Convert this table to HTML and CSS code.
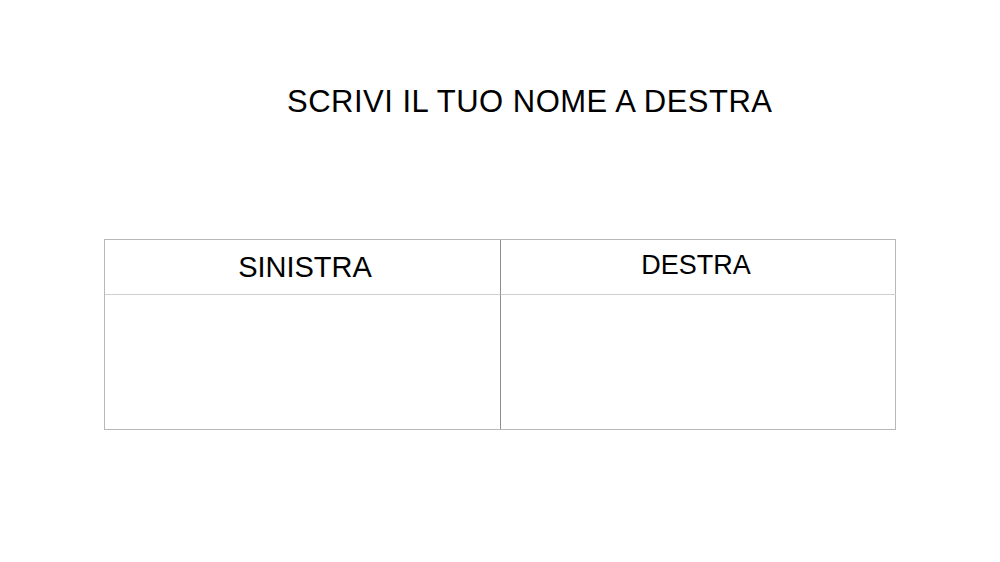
FILE: index.html
```html
<!DOCTYPE html>
<html lang="it">
<head>
<meta charset="utf-8">
<link rel="stylesheet" href="styles.css">
</head>
<body>
<main class="slide">
  <h1 class="title">SCRIVI IL TUO NOME A DESTRA</h1>
  <div class="table">
    <div class="cell head left"><span class="lbl-left">SINISTRA</span></div>
    <div class="cell head right"><span class="lbl-right">DESTRA</span></div>
    <div class="cell body left"></div>
    <div class="cell body right"></div>
  </div>
</main>
</body>
</html>
```
FILE: styles.css
```css
html, body {
  margin: 0;
  padding: 0;
  background: #ffffff;
}
.slide {
  width: 1000px;
  height: 562px;
  font-family: "Liberation Sans", Arial, sans-serif;
  color: #000;
  display: flex;
  flex-direction: column;
  align-items: flex-start;
}
.title {
  margin: 84px 0 0 287px;
  font-size: 31px;
  font-weight: normal;
  line-height: 36px;
  letter-spacing: 0.5px;
}
.table {
  margin: 119px 0 0 104px;
  width: 792px;
  height: 191px;
  box-sizing: border-box;
  border: 1px solid #b8b8b8;
  display: grid;
  grid-template-columns: 396px 395px;
  grid-template-rows: 55px 134px;
}
.cell {
  display: flex;
  justify-content: center;
}
.head {
  border-bottom: 1px solid #cfcfcf;
}
.left {
  border-right: 1px solid #8e8e8e;
}
.lbl-left {
  font-size: 29px;
  line-height: 33px;
  margin: 11px 0 0 5px;
}
.lbl-right {
  font-size: 27px;
  line-height: 31px;
  margin: 10px 5px 0 0;
}
```
